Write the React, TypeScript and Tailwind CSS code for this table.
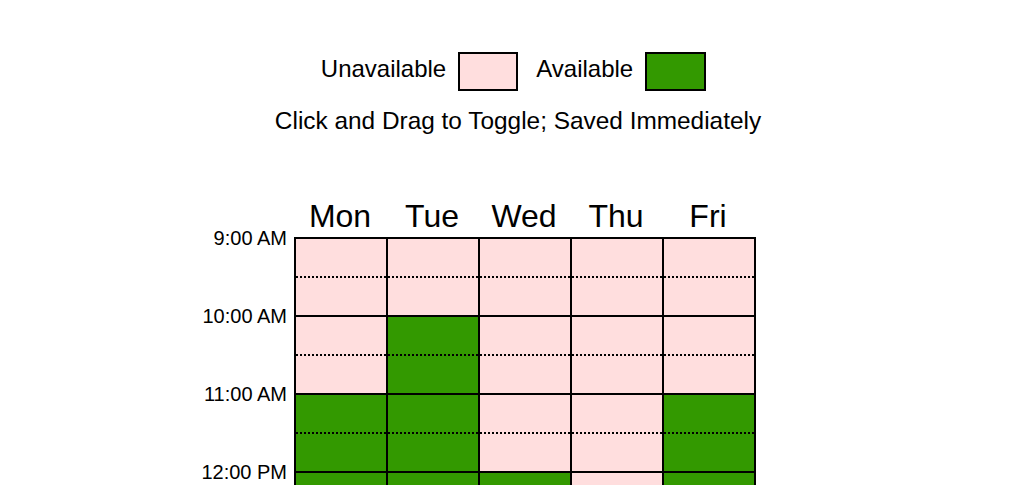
import { useState } from 'react';

const days = ['Mon', 'Tue', 'Wed', 'Thu', 'Fri'];
const hours = ['9:00 AM', '10:00 AM', '11:00 AM', '12:00 PM'];

// 半小时一格，true = 可用
const initial: boolean[][] = [
  [false, false, false, false, true, true, true, true],
  [false, false, true, true, true, true, true, true],
  [false, false, false, false, false, false, true, true],
  [false, false, false, false, false, false, false, false],
  [false, false, false, false, true, true, true, true],
];

export default function App() {
  const [slots, setSlots] = useState(initial);

  const toggle = (d: number, s: number) => {
    setSlots(prev =>
      prev.map((col, i) => (i === d ? col.map((v, j) => (j === s ? !v : v)) : col))
    );
  };

  return (
    <div className="min-h-screen bg-white pt-[52px] text-black font-['Liberation_Sans',Arial,Helvetica,sans-serif]">
      {/* 图例 */}
      <div className="flex items-center justify-center pl-[18px]">
        <span className="mb-[5px] text-[24px] leading-[28px]">Unavailable</span>
        <div className="ml-[12px] h-[39px] w-[60px] border-2 border-black bg-[#ffdede]" />
        <span className="mb-[5px] ml-[18px] text-[24px] leading-[28px]">Available</span>
        <div className="ml-[12px] h-[39px] w-[61px] border-2 border-black bg-[#339900]" />
      </div>
      <p className="mt-[16px] pl-[27px] text-center text-[24.4px] leading-[28px]">
        Click and Drag to Toggle; Saved Immediately
      </p>

      {/* 时间表 */}
      <div className="mt-[63px] flex items-start justify-center pr-[52px]">
        <div className="flex w-[86px] flex-col pt-[28px] text-right">
          {hours.map(h => (
            <div key={h} className="h-[78px] text-[20px] leading-[24px]">
              {h}
            </div>
          ))}
        </div>
        <div className="ml-[7px] flex flex-col">
          <div className="mb-[3px] flex">
            {days.map(d => (
              <div key={d} className="w-[92px] text-center text-[32px] leading-[36px]">
                {d}
              </div>
            ))}
          </div>
          <div className="flex border-l-2 border-t-2 border-black">
            {days.map((d, di) => (
              <div key={d} className="flex w-[92px] flex-col">
                {hours.map((h, hi) => {
                  const top = slots[di][hi * 2];
                  const bottom = slots[di][hi * 2 + 1];
                  return (
                    <div key={h} className="flex h-[78px] flex-col border-b-2 border-r-2 border-black">
                      <div
                        onMouseDown={() => toggle(di, hi * 2)}
                        className={`h-[39px] border-b-2 border-dotted border-black ${top ? 'bg-[#339900]' : 'bg-[#ffdede]'}`}
                      />
                      <div
                        onMouseDown={() => toggle(di, hi * 2 + 1)}
                        className={`h-[37px] ${bottom ? 'bg-[#339900]' : 'bg-[#ffdede]'}`}
                      />
                    </div>
                  );
                })}
              </div>
            ))}
          </div>
        </div>
      </div>
    </div>
  );
}
